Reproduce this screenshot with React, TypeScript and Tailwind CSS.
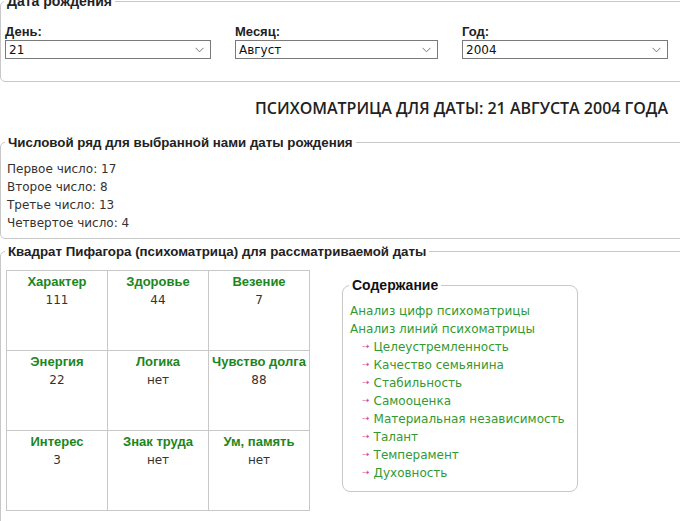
import React from "react";

const Select = ({ value }: { value: string }) => (
  <div className="flex h-[19px] items-center justify-between border border-[#7a7a7a] bg-white pl-[3px] pr-[6px] text-[12px] leading-none text-[#111]">
    <span>{value}</span>
    <svg width="9" height="6" viewBox="0 0 9 6" className="text-[#777]">
      <path d="M0.5 0.8 L4.5 4.8 L8.5 0.8" fill="none" stroke="currentColor" strokeWidth="1" />
    </svg>
  </div>
);

const cells: [string, string][] = [
  ["Характер", "111"],
  ["Здоровье", "44"],
  ["Везение", "7"],
  ["Энергия", "22"],
  ["Логика", "нет"],
  ["Чувство долга", "88"],
  ["Интерес", "3"],
  ["Знак труда", "нет"],
  ["Ум, память", "нет"],
];

const subs = [
  "Целеустремленность",
  "Качество семьянина",
  "Стабильность",
  "Самооценка",
  "Материальная независимость",
  "Талант",
  "Темперамент",
  "Духовность",
];

export default function App() {
  const body = { fontFamily: '"DejaVu Sans", Verdana, sans-serif' };
  const bold = { fontFamily: '"Liberation Sans", Arial, sans-serif' };
  return (
    <div className="h-[521px] w-[680px] overflow-hidden bg-white" style={body}>
      <div className="-mt-[9px] w-[700px]">
        <fieldset className="rounded-[5px] border border-[#c8c8c8] pb-[22px] pl-[4px]">
          <legend className="-ml-[1px] px-[3px] text-[14px] font-bold text-[#222]" style={bold}>
            Дата рождения
          </legend>
          <div className="mt-[12px] grid grid-cols-[206px_203px_206px] gap-x-6">
            {[
              ["День:", "21"],
              ["Месяц:", "Август"],
              ["Год:", "2004"],
            ].map(([l, v]) => (
              <div key={l} className="flex flex-col">
                <div className="text-[13px] font-bold leading-[16px] text-[#222]" style={bold}>
                  {l}
                </div>
                <Select value={v} />
              </div>
            ))}
          </div>
        </fieldset>

        <div className="w-[680px] pr-[12px] pt-[16px] text-right text-[16px] font-semibold leading-[20px] text-[#222]" style={{ fontFamily: '"Open Sans", sans-serif' }}>
          ПСИХОМАТРИЦА ДЛЯ ДАТЫ: 21 АВГУСТА 2004 ГОДА
        </div>

        <fieldset className="mt-[15px] rounded-[5px] border border-[#c8c8c8] pb-[6px] pl-[6px]">
          <legend className="-ml-[2px] px-[3px] text-[13.3px] font-bold text-[#222]" style={bold}>
            Числовой ряд для выбранной нами даты рождения
          </legend>
          <div className="mt-[7px] text-[12px] leading-[18px] text-[#333]">
            <div>Первое число: 17</div>
            <div>Второе число: 8</div>
            <div>Третье число: 13</div>
            <div>Четвертое число: 4</div>
          </div>
        </fieldset>

        <fieldset className="mt-[3px] rounded-[5px] border border-[#c8c8c8] pl-[5px] pb-[20px]">
          <legend className="-ml-[1px] px-[3px] text-[13.3px] font-bold text-[#222]" style={bold}>
            Квадрат Пифагора (психоматрица) для рассматриваемой даты
          </legend>
          <div className="mt-[8px] flex items-start">
            <div className="grid w-[304px] grid-cols-3 border-l border-t border-[#c8c8c8]">
              {cells.map(([h, v]) => (
                <div key={h} className="flex h-[80px] flex-col items-center border-b border-r border-[#c8c8c8] pt-[2px]">
                  <div className="text-[13px] font-bold leading-[18px] text-[#1c861c]" style={bold}>
                    {h}
                  </div>
                  <div className="text-[12px] leading-[18px] text-[#333]">{v}</div>
                </div>
              ))}
            </div>
            <fieldset className="ml-[32px] mt-[5px] w-[236px] rounded-[8px] border border-[#c8c8c8] pb-[9px] pl-[7px]">
              <legend className="-ml-[1px] px-[3px] text-[14px] font-bold text-[#111]" style={bold}>
                Содержание
              </legend>
              <div className="mt-[6px] text-[12px] leading-[18px] text-[#339933]">
                <div>Анализ цифр психоматрицы</div>
                <div>Анализ линий психоматрицы</div>
                {subs.map((s) => (
                  <div key={s} className="flex items-center pl-[12px]">
                    <span className="mr-[4px] text-[9px] leading-none text-[#cc4499]">⇢</span>
                    <span>{s}</span>
                  </div>
                ))}
              </div>
            </fieldset>
          </div>
        </fieldset>
      </div>
    </div>
  );
}
